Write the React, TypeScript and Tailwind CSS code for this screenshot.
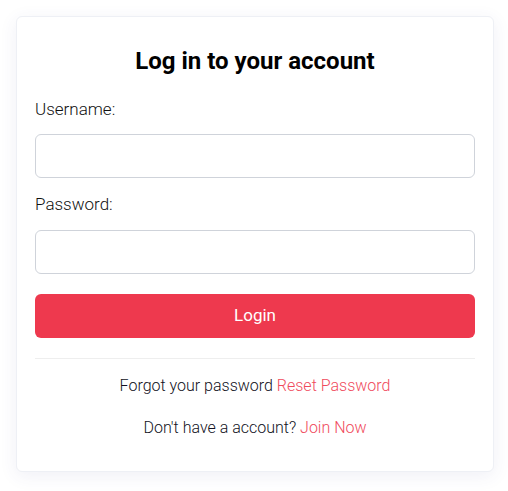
import React from 'react';

export default function App() {
  return (
    <div className="min-h-screen bg-white p-4 font-['Roboto',sans-serif]">
      <div className="w-[478px] rounded-md border border-[#eef0f5] bg-white px-[18px] pt-[28px] pb-[31px] shadow-[0_4px_18px_rgba(60,70,140,0.08)]">
        <h1 className="text-center text-[24px] font-bold leading-[32px] text-black">Log in to your account</h1>

        <form className="mt-5" onSubmit={(e) => e.preventDefault()}>
          <label className="block text-[17px] font-light leading-[24px] text-[#111]">Username:</label>
          <input
            type="text"
            className="mt-[13px] h-11 w-full rounded-md border border-[#cfd3da] bg-white px-3 outline-none"
          />

          <label className="mt-[14px] block text-[17px] font-light leading-[24px] text-[#111]">Password:</label>
          <input
            type="password"
            className="mt-[14px] h-11 w-full rounded-md border border-[#cfd3da] bg-white px-3 outline-none"
          />

          <button className="mt-5 h-11 w-full rounded-md bg-[#ee394e] text-[17px] text-white">Login</button>
        </form>

        <div className="mt-5 border-t border-[#eeeeee]" />

        <p className="mt-[15px] text-center text-[16px] font-light leading-[24px] text-[#111122]">
          Forgot your password <a href="#" className="text-[#f04a5c]">Reset Password</a>
        </p>
        <p className="mt-[18px] text-center text-[16px] font-light leading-[24px] text-[#111122]">
          Don't have a account? <a href="#" className="text-[#f04a5c]">Join Now</a>
        </p>
      </div>
    </div>
  );
}
